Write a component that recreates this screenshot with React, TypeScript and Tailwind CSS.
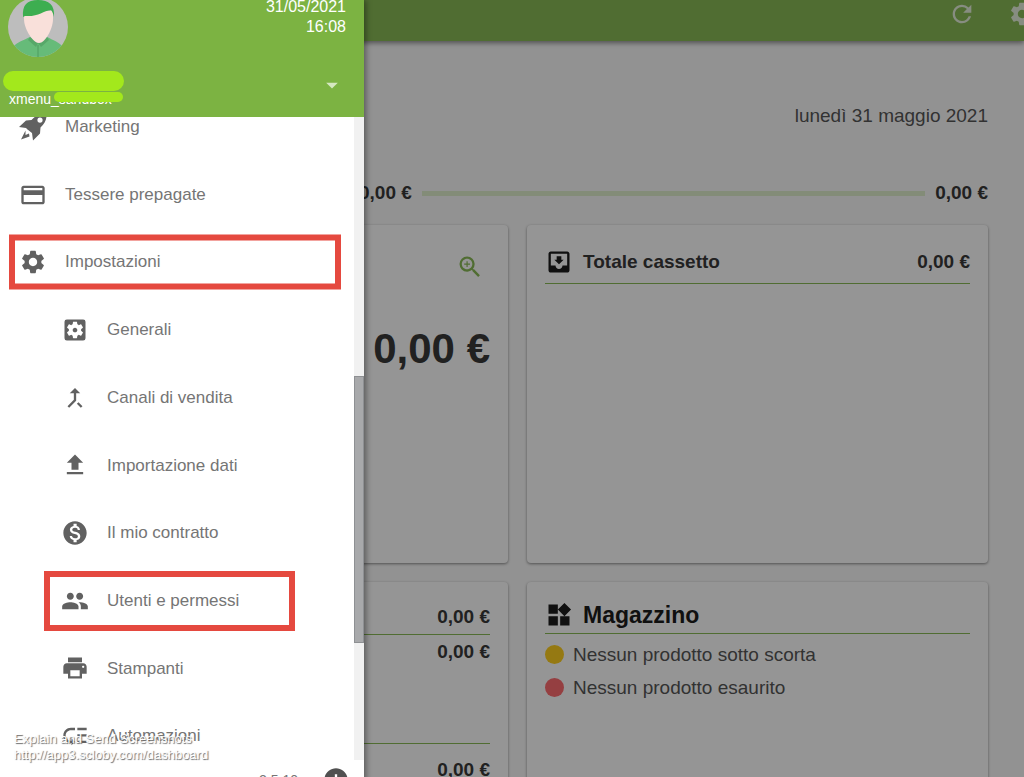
import React from 'react';
import {
  MdRefresh, MdSettings, MdCreditCard, MdSettingsApplications, MdCallMerge, MdFileUpload,
  MdMonetizationOn, MdPrint, MdLowPriority, MdArrowDropDown, MdAddCircle, MdZoomIn, MdMoveToInbox, MdWidgets,
} from 'react-icons/md';

interface MenuItem {
  label: string;
  icon: React.ReactNode;
  sub?: boolean;
  highlight?: string;
}

const RocketIcon = () => (
  <svg viewBox="0 0 28 28" className="h-7 w-7" fill="currentColor" aria-hidden="true">
    <path
      fillRule="evenodd"
      d="M27.5 0.5C21 0 16 3 12.5 7L7 7.5L0 14L7 15L8.500 16.500L13 20L14 27.500L21 20.500L21.500 14.500C26 10.500 28 6 27.500 0.500ZM21 4.500A2.600 2.600 0 1 1 21 9.700A2.600 2.600 0 1 1 21 4.500Z"
    />
    <path d="M6.500 17.500L2 26.500L10.500 23.500L10 20.500L6.500 22Z" />
  </svg>
);

const PeopleIcon = () => (
  <svg viewBox="0 0 24 24" className="h-7 w-7" fill="currentColor" aria-hidden="true">
    <path d="M16 11c1.660 0 2.990-1.340 2.990-3S17.660 5 16 5s-3 1.340-3 3 1.340 3 3 3zM8 11c1.660 0 2.990-1.340 2.990-3S9.660 5 8 5 5 6.340 5 8s1.340 3 3 3zM8 13c-2.330 0-7 1.170-7 3.500V19h14v-2.500c0-2.330-4.670-3.500-7-3.500zM16 13c-.290 0-.620.020-.970.050 1.160.840 1.970 1.970 1.970 3.450V19h6v-2.500c0-2.330-4.670-3.500-7-3.500z" />
  </svg>
);

const menu: MenuItem[] = [
  { label: 'Marketing', icon: <RocketIcon /> },
  { label: 'Tessere prepagate', icon: <MdCreditCard size={28} /> },
  { label: 'Impostazioni', icon: <MdSettings size={28} />, highlight: 'left-[9px] w-[332px] h-[55px]' },
  { label: 'Generali', icon: <MdSettingsApplications size={28} />, sub: true },
  { label: 'Canali di vendita', icon: <MdCallMerge size={28} />, sub: true },
  { label: 'Importazione dati', icon: <MdFileUpload size={28} />, sub: true },
  { label: 'Il mio contratto', icon: <MdMonetizationOn size={28} />, sub: true },
  { label: 'Utenti e permessi', icon: <PeopleIcon />, sub: true, highlight: 'left-11 w-[251px] h-[60px]' },
  { label: 'Stampanti', icon: <MdPrint size={28} />, sub: true },
  { label: 'Automazioni', icon: <MdLowPriority size={28} />, sub: true },
];

const Avatar = () => (
  <svg viewBox="0 0 60 60" className="w-[60px] h-[60px]" aria-hidden="true">
    <defs>
      <clipPath id="avatar">
        <circle cx="30" cy="30" r="30" />
      </clipPath>
    </defs>
    <g clipPath="url(#avatar)">
      <rect width="60" height="60" fill="#bdbdbd" />
      <path d="M5 60V50C9 45 16 43 22 40L30 46L39 40C45 43 51 45 55 50V60Z" fill="#66bb79" />
      <path d="M22 40L20 43L28 50L30 46L33 50L41 43L39 40L30 46Z" fill="#57a869" />
      <path d="M30 48V60" stroke="#4f9c60" strokeWidth="1" />
      <path d="M16 14H45V22C45 32 37 46 31 46C25 46 16 32 16 22Z" fill="#f9e0da" />
      <path d="M15 20C14 8 19 3 30 3C41 3 47 8 46 20C45 16 44 14 43 13C35 14 30 20 17 19Z" fill="#3dae50" />
    </g>
  </svg>
);

const Sidebar = () => (
  <aside className="absolute left-0 top-0 z-20 flex h-[calc(100vh+23px)] w-[364px] flex-col bg-white shadow-[2px_0_6px_rgba(0,0,0,0.4)]">
    <header className="relative h-[117px] shrink-0 overflow-hidden bg-[#7cb342] text-white">
      <div className="-mt-[3px] flex items-start justify-between pl-2 pr-[18px]">
        <Avatar />
        <div className="text-right text-base leading-5">
          <div>31/05/2021</div>
          <div>16:08</div>
        </div>
      </div>
      <div className="mt-[33px] pl-[9px] text-sm leading-[18px]">xmenu_sandbox</div>
      <div className="absolute left-[3px] top-[71px] h-5 w-[121px] rounded-full bg-[#a3e81c]" />
      <div className="absolute left-[54px] top-[92px] h-[10px] w-[69px] rounded-full bg-[#a3e81c]" />
      <button aria-label="Account" className="absolute right-[18px] top-[71px] text-[#d5e8c0]">
        <MdArrowDropDown size={28} />
      </button>
    </header>

    <div className="relative min-h-0 flex-1 overflow-hidden">
      <nav className="-mt-6 grid h-[677px] auto-rows-fr">
        {menu.map((item) => (
          <a
            key={item.label}
            href="#"
            className={`relative flex items-center text-[17px] text-[#757575] ${item.sub ? 'pl-[61px]' : 'pl-[19px]'}`}
          >
            <span className="mr-[18px] text-[#616161]">{item.icon}</span>
            {item.label}
            {item.highlight && (
              <span className={`absolute top-1/2 -translate-y-1/2 border-6 border-[#e5493f] ${item.highlight}`} />
            )}
          </a>
        ))}
      </nav>
      <div className="absolute inset-y-0 right-0 w-[10px] bg-[#f1f1f1]">
        <div className="mt-[259px] h-[267px] border border-[#8e9093] bg-[#a8a9ab]" />
      </div>
    </div>

    <footer className="flex h-10 shrink-0 items-center justify-end gap-6 pr-[14px] text-sm text-[#757575]">
      <span>2.5.10</span>
      <button aria-label="Aggiungi" className="text-[#505050]">
        <MdAddCircle size={28} />
      </button>
    </footer>
  </aside>
);

const Card = ({ children }: { children: React.ReactNode }) => (
  <section className="h-[338px] rounded-sm bg-white px-[18px] shadow-[0_1px_3px_rgba(0,0,0,0.5)]">{children}</section>
);

const Dashboard = () => (
  <main className="text-[#212121]">
    <header className="flex h-[41px] items-start justify-end gap-8 overflow-hidden bg-[#7cb342] text-white/80 shadow-[0_2px_5px_rgba(0,0,0,0.5)]">
      <button aria-label="Aggiorna"><MdRefresh size={28} /></button>
      <button aria-label="Impostazioni" className="-mr-3"><MdSettings size={28} /></button>
    </header>

    <div className="pl-[47px] pr-9">
      <p className="pt-[61px] text-right text-[19px] leading-7 text-[#424242]">lunedì 31 maggio 2021</p>

      <div className="mt-[49px] flex items-center gap-[10px] text-[19px] font-bold leading-7">
        <div className="h-[5px] flex-3 bg-[#dcedc8]" />
        <span>0,00 €</span>
        <div className="h-[5px] flex-5 bg-[#dcedc8]" />
        <span>0,00 €</span>
      </div>

      <div className="mt-[18px] grid grid-cols-2 gap-[19px]">
        <Card>
          <div className="flex justify-end pt-7 pr-[6px] text-[#7cb342]">
            <button aria-label="Dettaglio"><MdZoomIn size={28} /></button>
          </div>
          <p className="mt-11 text-right text-[42px] font-bold leading-[48px]">0,00 €</p>
        </Card>
        <Card>
          <h2 className="flex items-center border-b border-[#7cb342] pt-[22px] pb-[6px] text-[19px] font-bold leading-[30px]">
            <MdMoveToInbox size={28} className="text-black" />
            <span className="ml-[10px] flex-1">Totale cassetto</span>
            <span>0,00 €</span>
          </h2>
        </Card>
        <Card>
          <div className="text-right text-[19px] font-bold leading-[34px]">
            <p className="border-b border-[#7cb342] pt-[18px]">0,00 €</p>
            <p className="h-[109px] border-b border-[#7cb342]">0,00 €</p>
            <p className="pt-[9px]">0,00 €</p>
          </div>
        </Card>
        <Card>
          <h2 className="mb-1 flex items-center border-b border-[#7cb342] pt-[18px] pb-[3px] text-[23px] font-bold leading-[30px] text-black">
            <MdWidgets size={28} />
            <span className="ml-[10px]">Magazzino</span>
          </h2>
          <ul className="text-[19px] leading-[33px] text-[#424242]">
            <li className="flex items-center gap-[9px]">
              <span className="h-[19px] w-[19px] rounded-full bg-[#ffca05]" />
              Nessun prodotto sotto scorta
            </li>
            <li className="flex items-center gap-[9px]">
              <span className="h-[19px] w-[19px] rounded-full bg-[#ff5a5f]" />
              Nessun prodotto esaurito
            </li>
          </ul>
        </Card>
      </div>
    </div>
  </main>
);

export default function App() {
  return (
    <div className="relative h-screen overflow-hidden bg-[#fafafa] font-['Liberation_Sans',Arial,sans-serif]">
      <Dashboard />
      <div className="absolute inset-0 z-10 bg-[#212121]/48" />
      <Sidebar />
      <div className="absolute bottom-[14px] left-[14px] z-30 text-[13px] leading-4 text-white [text-shadow:1px_1px_1px_#666]">
        <p>Explain and Send Screenshots</p>
        <p>http://app3.scloby.com/dashboard</p>
      </div>
    </div>
  );
}
